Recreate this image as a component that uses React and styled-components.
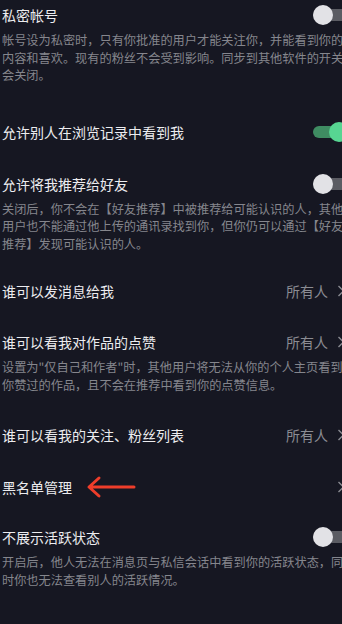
import styled, { createGlobalStyle } from "styled-components";

const GlobalStyle = createGlobalStyle`
    html, body {
        margin: 0;
        padding: 0;
        background: #161722;
        overflow: hidden;
    }
    body {
        font-family: "Noto Sans CJK SC", "Noto Sans", sans-serif;
    }
`;

const items = [
    {
        title: "私密帐号",
        top: 0,
        control: "off",
        desc: [
            "帐号设为私密时，只有你批准的用户才能关注你，并能看到你的",
            "内容和喜欢。现有的粉丝不会受到影响。同步到其他软件的开关",
            "会关闭。",
        ],
    },
    { title: "允许别人在浏览记录中看到我", top: 32, control: "on" },
    {
        title: "允许将我推荐给好友",
        top: 22,
        control: "off",
        desc: [
            "关闭后，你不会在【好友推荐】中被推荐给可能认识的人，其他",
            "用户也不能通过他上传的通讯录找到你，但你仍可以通过【好友",
            "推荐】发现可能认识的人。",
        ],
    },
    { title: "谁可以发消息给我", top: 23, value: "所有人" },
    {
        title: "谁可以看我对作品的点赞",
        top: 21,
        value: "所有人",
        desc: [
            "设置为\"仅自己和作者\"时，其他用户将无法从你的个人主页看到",
            "你赞过的作品，且不会在推荐中看到你的点赞信息。",
        ],
    },
    { title: "谁可以看我的关注、粉丝列表", top: 26, value: "所有人" },
    { title: "黑名单管理", top: 22, value: "", marked: true },
    {
        title: "不展示活跃状态",
        top: 20,
        control: "off",
        desc: [
            "开启后，他人无法在消息页与私信会话中看到你的活跃状态，同",
            "时你也无法查看别人的活跃情况。",
        ],
    },
];

function Chevron() {
    return (
        <svg width="8" height="12" viewBox="0 0 8 12">
            <polyline
                points="1.5,1 6.5,6 1.5,11"
                fill="none"
                stroke="#8a8b92"
                strokeWidth="1.4"
            />
        </svg>
    );
}

function RedArrow() {
    return (
        <svg width="50" height="24" viewBox="0 0 50 24">
            <path
                d="M48 12 H4 M13 3 L3 12 L13 21"
                fill="none"
                stroke="#ee3d2a"
                strokeWidth="3"
                strokeLinecap="round"
                strokeLinejoin="round"
            />
        </svg>
    );
}

function App() {
    return (
        <>
            <GlobalStyle />
            <StyledPage>
                {items.map((item, index) => (
                    <StyledItem key={index} $top={item.top}>
                        <StyledTitleRow>
                            <StyledTitle>{item.title}</StyledTitle>
                            {item.marked && (
                                <StyledMark>
                                    <RedArrow />
                                </StyledMark>
                            )}
                            {item.control ? (
                                <StyledToggle $on={item.control === "on"}>
                                    <span />
                                </StyledToggle>
                            ) : (
                                <StyledValue>
                                    {item.value}
                                    <Chevron />
                                </StyledValue>
                            )}
                        </StyledTitleRow>
                        {item.desc && (
                            <StyledDesc>
                                {item.desc.map((line, i) => (
                                    <div key={i}>{line}</div>
                                ))}
                            </StyledDesc>
                        )}
                    </StyledItem>
                ))}
            </StyledPage>
        </>
    );
}

export default App;

const StyledPage = styled.div`
    width: 350px;
    height: 624px;
    padding-left: 2px;
    box-sizing: border-box;
    display: flex;
    flex-direction: column;
    background: #161722;
`;
const StyledItem = styled.section`
    display: flex;
    flex-direction: column;
    margin-top: ${(p) => p.$top}px;
`;
const StyledTitleRow = styled.div`
    display: flex;
    align-items: center;
    height: 30px;
`;
const StyledTitle = styled.h2`
    margin: 0;
    font-size: 14px;
    font-weight: 400;
    color: #ececef;
    white-space: nowrap;
`;
const StyledMark = styled.span`
    display: flex;
    margin-left: 14px;
`;
const StyledValue = styled.div`
    margin-left: auto;
    margin-right: 5px;
    display: flex;
    align-items: center;
    gap: 9px;
    font-size: 14px;
    color: #8b8c93;
`;
const StyledToggle = styled.div`
    position: relative;
    margin-left: auto;
    margin-right: 1px;
    width: 36px;
    height: 12px;
    border-radius: 6px;
    background: ${(p) => (p.$on ? "#3f8c62" : "#5b5c63")};
    span {
        position: absolute;
        top: -4px;
        left: ${(p) => (p.$on ? "16px" : "0")};
        width: 20px;
        height: 20px;
        border-radius: 50%;
        background: ${(p) => (p.$on ? "#57d592" : "#e2e2e6")};
    }
`;
const StyledDesc = styled.div`
    padding-top: 2px;
    font-size: 12.2px;
    line-height: 17.5px;
    color: #85868d;
    white-space: nowrap;
`;
